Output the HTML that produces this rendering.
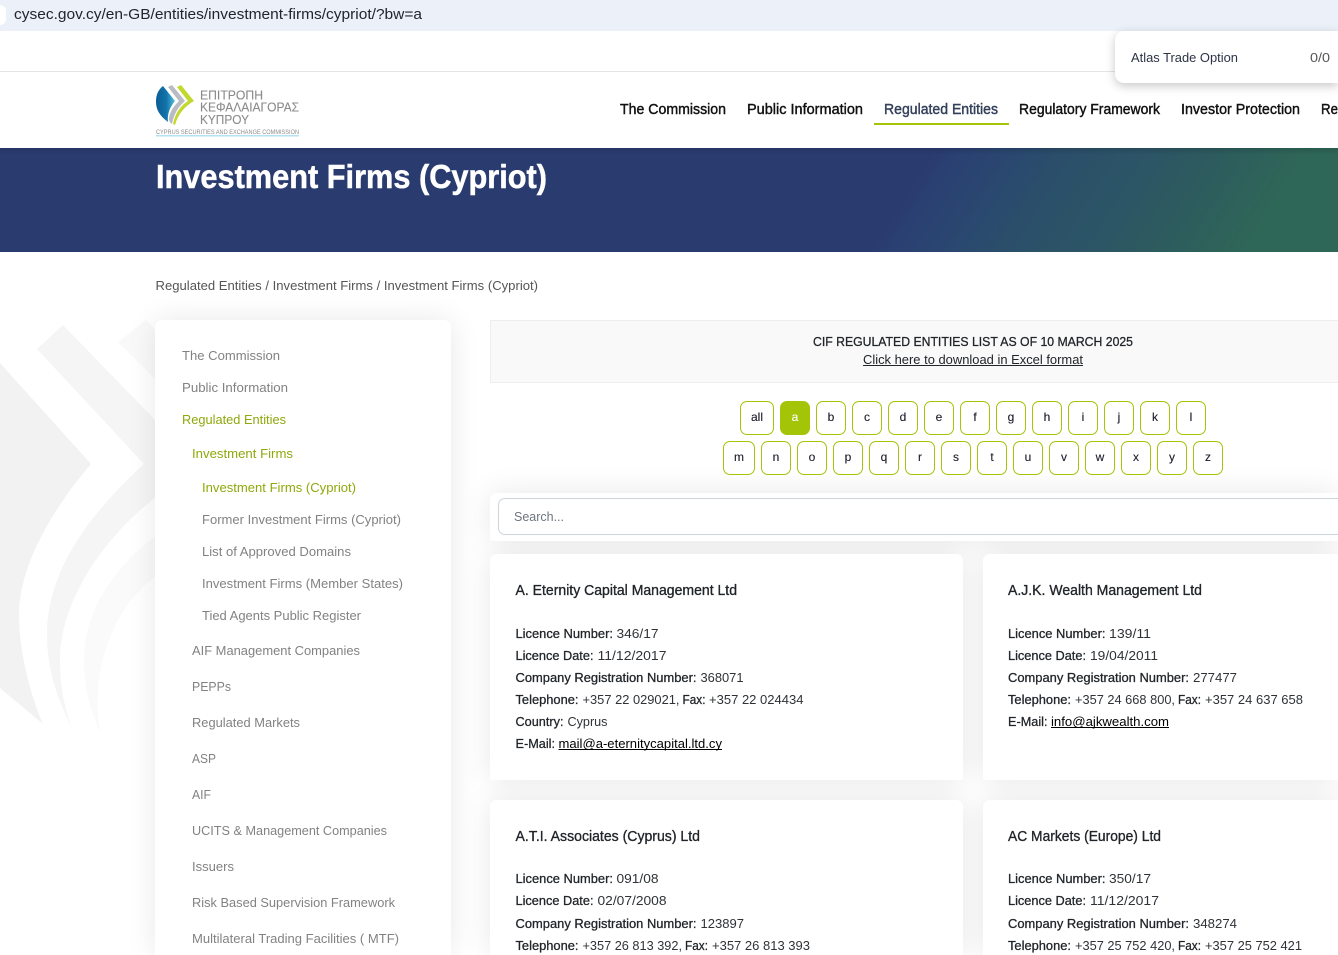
<!DOCTYPE html>
<html lang="en"><head><meta charset="utf-8"><title>Investment Firms (Cypriot)</title>
<style>
html,body{margin:0;padding:0;background:#fff;width:1338px;height:955px;overflow:hidden}
#w{position:relative;width:1338px;height:955px;overflow:hidden;background:#fff}
.b{position:absolute;box-sizing:border-box}
.sh{box-shadow:0 0 30px rgba(0,0,0,.095);border-radius:7px 7px 0 0}
.card{background:#fff;border-radius:7px}
.tr{border-radius:7px 0 0 7px}
.k{position:absolute;box-sizing:border-box;width:30px;height:34px;top:401px;border:1px solid #a4c408;border-radius:7px;background:#fff}
.r2{top:441px}
svg{position:absolute;left:0;top:0}
text{font-family:"Liberation Sans","Noto Sans CJK SC",sans-serif}
.t{font-size:13px;fill:#2f3337}
.l{font-size:13px;fill:#212529;stroke:#212529;stroke-width:.28px}
.n{font-size:14.5px;fill:#111;stroke:#111;stroke-width:.42px}
.h{font-size:14.5px;fill:#212529;stroke:#212529;stroke-width:.32px}
.s{font-size:13px;fill:#828282}
.g{fill:#8fa80a}
.q{font-size:12px;fill:#1c1c2c;stroke:#1c1c2c;stroke-width:.12px;text-anchor:middle}
</style></head><body><div id="w">
<!-- watermark -->
<svg width="1338" height="955">
<path d="M0,363 L91,464 C60,500 19,560 19,615 C19,650 30,695 43,724 L0,688 Z" fill="#f2f2f2"/>
<path d="M144,464 C105,500 47,560 47,635 C47,670 58,700 71,726 C64,705 60,685 60,660 C60,600 105,535 160,494 L160,425 L63,325 L37,349 Z" fill="#f5f5f5"/>
<path d="M118,342 L146,320 L160,335 L160,384 Z" fill="#f9f9f9"/>
<path d="M160,533 C115,565 84,610 84,660 C84,690 92,715 101,734 C97,720 97,705 98,690 C100,650 120,600 160,573 Z" fill="#fafafa"/>
</svg>
<!-- browser bar -->
<div class="b" style="left:0;top:0;width:1338px;height:31px;background:#ebf0f9"></div>
<div class="b" style="left:0;top:5px;width:6px;height:20px;border-radius:0 10px 10px 0;background:#fff"></div>
<div class="b" style="left:0;top:71px;width:1338px;height:1px;background:#e4e4e4"></div>
<div class="b" style="left:1115px;top:31px;width:223px;height:52px;background:#fff;border-radius:9px 0 0 9px;box-shadow:0 3px 10px rgba(0,0,0,.22)"></div>
<!-- nav underline -->
<div class="b" style="left:874px;top:123px;width:135px;height:2px;background:#a4c408"></div>
<!-- banner -->
<div class="b" style="left:0;top:148px;width:1338px;height:104px;overflow:hidden;background:#2a3b70">
<svg width="1338" height="104">
<defs><linearGradient id="ban" gradientUnits="userSpaceOnUse" x1="0" y1="0" x2="1338" y2="0"><stop offset="0" stop-color="#2a3b70"/><stop offset=".70" stop-color="#2a3b70"/><stop offset=".716" stop-color="#2a4072"/><stop offset=".762" stop-color="#2a4870"/><stop offset=".80" stop-color="#2b4f6a"/><stop offset=".863" stop-color="#2c5566"/><stop offset=".905" stop-color="#2d5a5f"/><stop offset=".97" stop-color="#2e6558"/><stop offset="1" stop-color="#2e6757"/></linearGradient>
<linearGradient id="top" x1="0" x2="0" y1="0" y2="1"><stop offset="0" stop-color="#000" stop-opacity=".12"/><stop offset="1" stop-color="#000" stop-opacity="0"/></linearGradient></defs>
<g transform="skewX(-32)"><rect x="0" width="1403" height="104" fill="url(#ban)"/></g>
<rect width="1338" height="7" fill="url(#top)"/>
</svg></div>
<!-- sidebar -->
<div class="b sh card" style="left:155px;top:320px;width:296px;height:635px;border-radius:7px 7px 0 0"></div>
<!-- CIF box -->
<div class="b" style="left:490px;top:320px;width:848px;height:63px;background:#f9f9f9;border:1px solid #eee;border-right:0"></div>
<!-- shadows -->
<div class="b sh" style="left:490px;top:493px;width:848px;height:48px"></div>
<div class="b sh" style="left:490px;top:554px;width:473px;height:226px"></div>
<div class="b sh" style="left:983px;top:554px;width:355px;height:226px"></div>
<div class="b sh" style="left:490px;top:800px;width:473px;height:155px"></div>
<div class="b sh" style="left:983px;top:800px;width:355px;height:155px"></div>
<!-- letter buttons -->
<div class="k" style="left:740px;width:34px"></div>
<div class="k" style="left:780px;background:#a4c408"></div>
<div class="k" style="left:816px"></div><div class="k" style="left:852px"></div><div class="k" style="left:888px"></div><div class="k" style="left:924px"></div><div class="k" style="left:960px"></div><div class="k" style="left:996px"></div><div class="k" style="left:1032px"></div><div class="k" style="left:1068px"></div><div class="k" style="left:1104px"></div><div class="k" style="left:1140px"></div><div class="k" style="left:1176px"></div>
<div class="k r2" style="left:723px;width:32px"></div>
<div class="k r2" style="left:761px"></div><div class="k r2" style="left:797px"></div><div class="k r2" style="left:833px"></div><div class="k r2" style="left:869px"></div><div class="k r2" style="left:905px"></div><div class="k r2" style="left:941px"></div><div class="k r2" style="left:977px"></div><div class="k r2" style="left:1013px"></div><div class="k r2" style="left:1049px"></div><div class="k r2" style="left:1085px"></div><div class="k r2" style="left:1121px"></div><div class="k r2" style="left:1157px"></div><div class="k r2" style="left:1193px"></div>
<!-- search + cards -->
<div class="b card" style="left:490px;top:493px;width:848px;height:48px;border-radius:7px 0 0 7px"></div>
<div class="b" style="left:498px;top:498px;width:840px;height:37px;border:1px solid #ced4da;border-right:0;border-radius:7px 0 0 7px;background:#fff"></div>
<div class="b card" style="left:490px;top:554px;width:473px;height:226px"></div>
<div class="b card" style="left:983px;top:554px;width:355px;height:226px;border-radius:7px 0 0 7px"></div>
<div class="b card" style="left:490px;top:800px;width:473px;height:155px;border-radius:7px 7px 0 0"></div>
<div class="b card" style="left:983px;top:800px;width:355px;height:155px;border-radius:7px 0 0 0"></div>

<svg width="1338" height="955">
<defs><linearGradient id="leaf" x1="0" x2="1" y1="0" y2="0"><stop offset="0" stop-color="#0b5c94"/><stop offset=".55" stop-color="#1274ab"/><stop offset="1" stop-color="#57bfe0"/></linearGradient></defs>
<!-- url -->
<text x="14" y="19" font-size="15" fill="#202530" textLength="408" lengthAdjust="spacingAndGlyphs">cysec.gov.cy/en-GB/entities/investment-firms/cypriot/?bw=a</text>
<text x="1131" y="62" font-size="13" fill="#2c3345" textLength="107" lengthAdjust="spacingAndGlyphs">Atlas Trade Option</text>
<text x="1310" y="62" font-size="13" fill="#555" textLength="20" lengthAdjust="spacingAndGlyphs">0/0</text>
<!-- logo -->
<path d="M163,86 L175,101 C170,107 167,114 168,122 C160,116 156,110 156,102 C156,95 158,90 163,86Z" fill="url(#leaf)"/>
<path d="M168,87 L172,85 L185,101 C178,107 174,114 172,124 C169,122 169,120 169,118 C170,111 174,106 179,101 Z" fill="#b9bcc2"/>
<path d="M177,87 L181,85 L194,101 C185,106 178,114 175,125 L173,124 C175,114 180,106 188,101 Z" fill="#c3d82e"/>
<g fill="#8b8b8b" stroke="#8b8b8b" stroke-width=".1">
<text x="200" y="99.5" font-size="13" textLength="63" lengthAdjust="spacingAndGlyphs">ΕΠΙΤΡΟΠΗ</text>
<text x="200" y="111.5" font-size="13" textLength="99" lengthAdjust="spacingAndGlyphs">ΚΕΦΑΛΑΙΑΓΟΡΑΣ</text>
<text x="200" y="124" font-size="13" textLength="49" lengthAdjust="spacingAndGlyphs">ΚΥΠΡΟΥ</text>
</g>
<text x="156" y="134" font-size="6" fill="#8b8b8b" textLength="143" lengthAdjust="spacingAndGlyphs">CYPRUS SECURITIES AND EXCHANGE COMMISSION</text>
<rect x="156" y="135" width="143" height="1.5" fill="#b5e2f3"/>
<!-- nav -->
<text class="n" x="620" y="114" textLength="106" lengthAdjust="spacingAndGlyphs">The Commission</text>
<text class="n" x="747" y="114" textLength="116" lengthAdjust="spacingAndGlyphs">Public Information</text>
<text class="n" x="884" y="114" textLength="114" lengthAdjust="spacingAndGlyphs" style="fill:#34405a;stroke:#34405a">Regulated Entities</text>
<text class="n" x="1019" y="114" textLength="141" lengthAdjust="spacingAndGlyphs">Regulatory Framework</text>
<text class="n" x="1181" y="114" textLength="119" lengthAdjust="spacingAndGlyphs">Investor Protection</text>
<text class="n" x="1321" y="114" textLength="17" lengthAdjust="spacingAndGlyphs">Re</text>
<!-- title -->
<text x="156" y="188" font-size="33" font-weight="700" fill="#fff" stroke="#fff" stroke-width=".5" textLength="391" lengthAdjust="spacingAndGlyphs">Investment Firms (Cypriot)</text>
<text x="155.5" y="290" font-size="13" fill="#555" textLength="382.5" lengthAdjust="spacingAndGlyphs">Regulated Entities / Investment Firms / Investment Firms (Cypriot)</text>
<!-- sidebar -->
<text class="s" x="182" y="360" textLength="98" lengthAdjust="spacingAndGlyphs">The Commission</text>
<text class="s" x="182" y="392" textLength="106" lengthAdjust="spacingAndGlyphs">Public Information</text>
<text class="s g" x="182" y="424" textLength="104" lengthAdjust="spacingAndGlyphs">Regulated Entities</text>
<text class="s g" x="192" y="458" textLength="101" lengthAdjust="spacingAndGlyphs">Investment Firms</text>
<text class="s g" x="202" y="492" textLength="154" lengthAdjust="spacingAndGlyphs">Investment Firms (Cypriot)</text>
<text class="s" x="202" y="524" textLength="199" lengthAdjust="spacingAndGlyphs">Former Investment Firms (Cypriot)</text>
<text class="s" x="202" y="556" textLength="149" lengthAdjust="spacingAndGlyphs">List of Approved Domains</text>
<text class="s" x="202" y="588" textLength="201" lengthAdjust="spacingAndGlyphs">Investment Firms (Member States)</text>
<text class="s" x="202" y="620" textLength="159" lengthAdjust="spacingAndGlyphs">Tied Agents Public Register</text>
<text class="s" x="192" y="655" textLength="168" lengthAdjust="spacingAndGlyphs">AIF Management Companies</text>
<text class="s" x="192" y="691" textLength="39" lengthAdjust="spacingAndGlyphs">PEPPs</text>
<text class="s" x="192" y="727" textLength="108" lengthAdjust="spacingAndGlyphs">Regulated Markets</text>
<text class="s" x="192" y="763" textLength="24" lengthAdjust="spacingAndGlyphs">ASP</text>
<text class="s" x="192" y="799" textLength="19" lengthAdjust="spacingAndGlyphs">AIF</text>
<text class="s" x="192" y="835" textLength="195" lengthAdjust="spacingAndGlyphs">UCITS &amp; Management Companies</text>
<text class="s" x="192" y="871" textLength="42" lengthAdjust="spacingAndGlyphs">Issuers</text>
<text class="s" x="192" y="907" textLength="203" lengthAdjust="spacingAndGlyphs">Risk Based Supervision Framework</text>
<text class="s" x="192" y="943" textLength="207" lengthAdjust="spacingAndGlyphs">Multilateral Trading Facilities ( MTF)</text>
<!-- CIF -->
<text class="l" x="813" y="346" textLength="320" lengthAdjust="spacingAndGlyphs">CIF REGULATED ENTITIES LIST AS OF 10 MARCH 2025</text>
<text class="t" x="863" y="364" textLength="220" lengthAdjust="spacingAndGlyphs" style="fill:#212529">Click here to download in Excel format</text>
<rect x="863" y="365" width="220" height="1" fill="#212529"/>
<!-- letters -->
<text class="q" x="757" y="421">all</text><text class="q" x="795" y="421" style="fill:#fff;stroke:#fff">a</text><text class="q" x="831" y="421">b</text><text class="q" x="867" y="421">c</text><text class="q" x="903" y="421">d</text><text class="q" x="939" y="421">e</text><text class="q" x="975" y="421">f</text><text class="q" x="1011" y="421">g</text><text class="q" x="1047" y="421">h</text><text class="q" x="1083" y="421">i</text><text class="q" x="1119" y="421">j</text><text class="q" x="1155" y="421">k</text><text class="q" x="1191" y="421">l</text>
<text class="q" x="739" y="461">m</text><text class="q" x="776" y="461">n</text><text class="q" x="812" y="461">o</text><text class="q" x="848" y="461">p</text><text class="q" x="884" y="461">q</text><text class="q" x="920" y="461">r</text><text class="q" x="956" y="461">s</text><text class="q" x="992" y="461">t</text><text class="q" x="1028" y="461">u</text><text class="q" x="1064" y="461">v</text><text class="q" x="1100" y="461">w</text><text class="q" x="1136" y="461">x</text><text class="q" x="1172" y="461">y</text><text class="q" x="1208" y="461">z</text>
<text x="514" y="521" font-size="13" fill="#6c757d" textLength="50" lengthAdjust="spacingAndGlyphs">Search...</text>
<!-- card 1 -->
<text class="h" x="515.5" y="595" textLength="221.5" lengthAdjust="spacingAndGlyphs">A. Eternity Capital Management Ltd</text>
<text class="l" x="515.5" y="638" textLength="97.5" lengthAdjust="spacingAndGlyphs">Licence Number:</text><text class="t" x="616.5" y="638" textLength="42" lengthAdjust="spacingAndGlyphs">346/17</text>
<text class="l" x="515.5" y="660" textLength="78" lengthAdjust="spacingAndGlyphs">Licence Date:</text><text class="t" x="597.5" y="660" textLength="69" lengthAdjust="spacingAndGlyphs">11/12/2017</text>
<text class="l" x="515.5" y="682" textLength="181" lengthAdjust="spacingAndGlyphs">Company Registration Number:</text><text class="t" x="700.5" y="682" textLength="43" lengthAdjust="spacingAndGlyphs">368071</text>
<text class="l" x="515.5" y="704" textLength="63" lengthAdjust="spacingAndGlyphs">Telephone:</text><text class="t" x="582.5" y="704" textLength="97" lengthAdjust="spacingAndGlyphs">+357 22 029021,</text><text class="l" x="682.5" y="704" textLength="23" lengthAdjust="spacingAndGlyphs">Fax:</text><text class="t" x="709" y="704" textLength="94.5" lengthAdjust="spacingAndGlyphs">+357 22 024434</text>
<text class="l" x="515.5" y="726" textLength="48" lengthAdjust="spacingAndGlyphs">Country:</text><text class="t" x="567.5" y="726" textLength="40" lengthAdjust="spacingAndGlyphs">Cyprus</text>
<text class="l" x="515.5" y="748" textLength="39.5" lengthAdjust="spacingAndGlyphs">E-Mail:</text><text class="t" x="558.5" y="748" textLength="163.5" lengthAdjust="spacingAndGlyphs" style="fill:#000">mail@a-eternitycapital.ltd.cy</text>
<rect x="558.5" y="749" width="163.5" height="1" fill="#000"/>
<!-- card 2 -->
<text class="h" x="1008" y="595" textLength="194" lengthAdjust="spacingAndGlyphs">A.J.K. Wealth Management Ltd</text>
<text class="l" x="1008" y="638" textLength="97.5" lengthAdjust="spacingAndGlyphs">Licence Number:</text><text class="t" x="1109" y="638" textLength="42" lengthAdjust="spacingAndGlyphs">139/11</text>
<text class="l" x="1008" y="660" textLength="78" lengthAdjust="spacingAndGlyphs">Licence Date:</text><text class="t" x="1090" y="660" textLength="68" lengthAdjust="spacingAndGlyphs">19/04/2011</text>
<text class="l" x="1008" y="682" textLength="181" lengthAdjust="spacingAndGlyphs">Company Registration Number:</text><text class="t" x="1193" y="682" textLength="44" lengthAdjust="spacingAndGlyphs">277477</text>
<text class="l" x="1008" y="704" textLength="63" lengthAdjust="spacingAndGlyphs">Telephone:</text><text class="t" x="1075" y="704" textLength="100" lengthAdjust="spacingAndGlyphs">+357 24 668 800,</text><text class="l" x="1178" y="704" textLength="23" lengthAdjust="spacingAndGlyphs">Fax:</text><text class="t" x="1205" y="704" textLength="98" lengthAdjust="spacingAndGlyphs">+357 24 637 658</text>
<text class="l" x="1008" y="726" textLength="39.5" lengthAdjust="spacingAndGlyphs">E-Mail:</text><text class="t" x="1051" y="726" textLength="118" lengthAdjust="spacingAndGlyphs" style="fill:#000">info@ajkwealth.com</text>
<rect x="1051" y="727" width="118" height="1" fill="#000"/>
<!-- card 3 -->
<text class="h" x="515.5" y="841" textLength="184.5" lengthAdjust="spacingAndGlyphs">A.T.I. Associates (Cyprus) Ltd</text>
<text class="l" x="515.5" y="883" textLength="97.5" lengthAdjust="spacingAndGlyphs">Licence Number:</text><text class="t" x="616.5" y="883" textLength="42" lengthAdjust="spacingAndGlyphs">091/08</text>
<text class="l" x="515.5" y="905" textLength="78" lengthAdjust="spacingAndGlyphs">Licence Date:</text><text class="t" x="597.5" y="905" textLength="69" lengthAdjust="spacingAndGlyphs">02/07/2008</text>
<text class="l" x="515.5" y="928" textLength="181" lengthAdjust="spacingAndGlyphs">Company Registration Number:</text><text class="t" x="700.5" y="928" textLength="43.5" lengthAdjust="spacingAndGlyphs">123897</text>
<text class="l" x="515.5" y="950" textLength="63" lengthAdjust="spacingAndGlyphs">Telephone:</text><text class="t" x="582.5" y="950" textLength="99.5" lengthAdjust="spacingAndGlyphs">+357 26 813 392,</text><text class="l" x="685" y="950" textLength="23" lengthAdjust="spacingAndGlyphs">Fax:</text><text class="t" x="712" y="950" textLength="98" lengthAdjust="spacingAndGlyphs">+357 26 813 393</text>
<!-- card 4 -->
<text class="h" x="1008" y="841" textLength="153" lengthAdjust="spacingAndGlyphs">AC Markets (Europe) Ltd</text>
<text class="l" x="1008" y="883" textLength="97.5" lengthAdjust="spacingAndGlyphs">Licence Number:</text><text class="t" x="1109" y="883" textLength="42" lengthAdjust="spacingAndGlyphs">350/17</text>
<text class="l" x="1008" y="905" textLength="78" lengthAdjust="spacingAndGlyphs">Licence Date:</text><text class="t" x="1090" y="905" textLength="69" lengthAdjust="spacingAndGlyphs">11/12/2017</text>
<text class="l" x="1008" y="928" textLength="181" lengthAdjust="spacingAndGlyphs">Company Registration Number:</text><text class="t" x="1193" y="928" textLength="44" lengthAdjust="spacingAndGlyphs">348274</text>
<text class="l" x="1008" y="950" textLength="63" lengthAdjust="spacingAndGlyphs">Telephone:</text><text class="t" x="1075" y="950" textLength="100" lengthAdjust="spacingAndGlyphs">+357 25 752 420,</text><text class="l" x="1178" y="950" textLength="23" lengthAdjust="spacingAndGlyphs">Fax:</text><text class="t" x="1205" y="950" textLength="97" lengthAdjust="spacingAndGlyphs">+357 25 752 421</text>
</svg>
</div></body></html>
